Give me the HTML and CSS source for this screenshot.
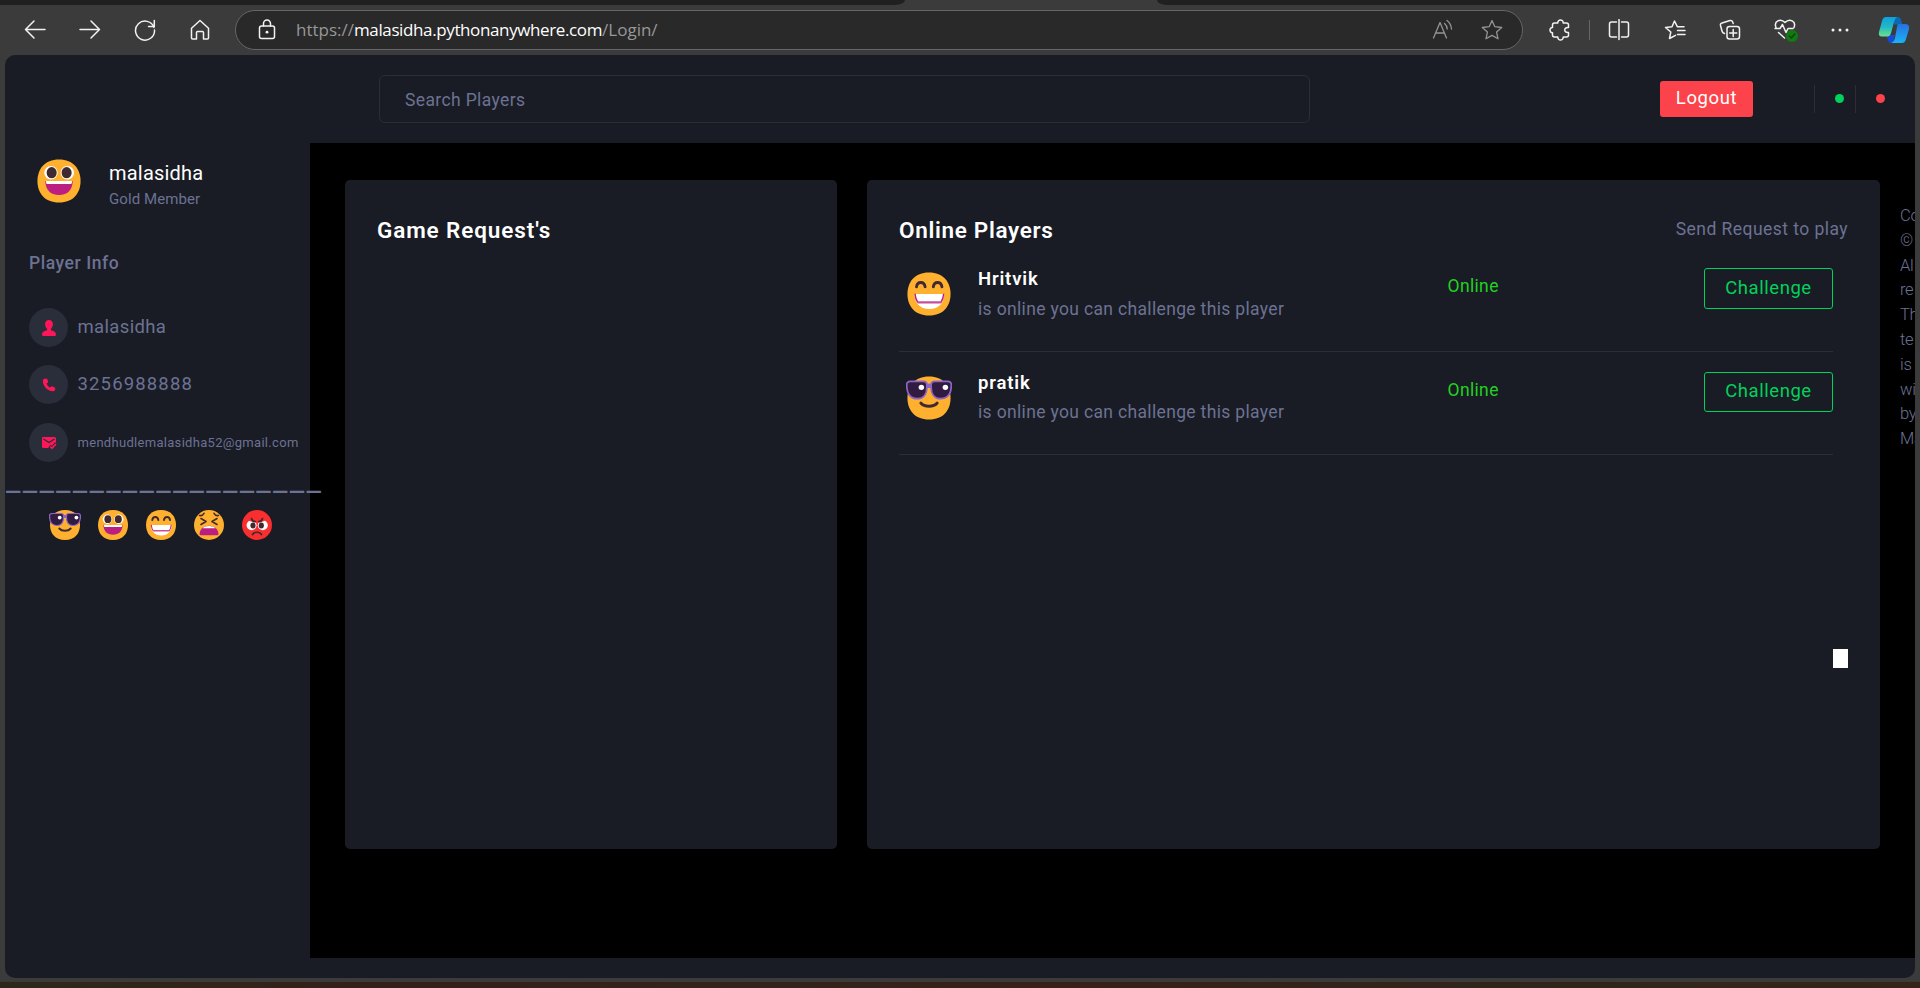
FILE: index.html
```html
<!DOCTYPE html>
<html lang="en">
<head>
<meta charset="utf-8">
<title>Players</title>
<link rel="stylesheet" href="styles.css">
</head>
<body>
<svg class="defs" aria-hidden="true">
  <symbol id="grin-eyes" viewBox="0 0 32 32">
    <path fill="#ffb02e" d="M16 1c10 0 15 6.700 15 15s-5 15-15 15S1 24.300 1 16 6 1 16 1z"/>
    <circle cx="10.400" cy="10.200" r="4.700" fill="#fff"/><circle cx="21.800" cy="10.200" r="4.700" fill="#fff"/>
    <ellipse cx="10.900" cy="10.200" rx="3.500" ry="3.900" fill="#402a32"/><ellipse cx="21.300" cy="10.200" rx="3.500" ry="3.900" fill="#402a32"/>
    <path fill="#bb1d80" d="M6.500 16h19c0 6-3.500 9.800-9.500 9.800S6.500 22 6.500 16z"/>
    <path fill="#fff" d="M7 16h18v1.300q0 .7-.7.7H7.700Q7 18 7 17.300z"/>
  </symbol>
  <symbol id="beam" viewBox="0 0 32 32">
    <path fill="#ffb02e" d="M16 1c10 0 15 6.700 15 15s-5 15-15 15S1 24.300 1 16 6 1 16 1z"/>
    <path d="M7.300 11c.5-4 5.500-4 6 0M19 11c.5-4 5.500-4 6 0" fill="none" stroke="#402a32" stroke-width="2" stroke-linecap="round"/>
    <path fill="#fff" d="M6 16h20.500c0 6-3.500 10.500-10.250 10.500S6 22 6 16z"/>
    <path d="M6.300 15.800q.2 3.600 2 6.100M26.200 15.800q-.2 3.600-2 6.100" fill="none" stroke="#bb1d80" stroke-width="1"/>
    <path fill="#c94f9b" d="M7.500 21.100h17.500l-.8 1.500H8.300z"/>
  </symbol>
  <symbol id="cool" viewBox="0 0 32 32">
    <path fill="#ffb02e" d="M16 1c10 0 15 6.700 15 15s-5 15-15 15S1 24.300 1 16 6 1 16 1z"/>
    <path d="M10.300 19.500c2.500 3 8.900 3 11.400 0" fill="none" stroke="#402a32" stroke-width="2" stroke-linecap="round"/>
    <path d="M.5 7q0-2.500 2.500-2.500h9q2.500 0 2.500 2v1.500h3V6.500q0-2 2.500-2h9q2.500 0 2.500 2.500c0 6-2.500 9.500-7.500 9.500-4 0-6.500-3-6.500-8h-3c0 5-2.500 8-6.500 8C3 16.500.5 13 .5 7z" fill="#321b41" stroke="#8d65c5" stroke-width="1.200"/>
    <path d="M14 7.200h4" stroke="#8d65c5" stroke-width="2.400"/>
    <circle cx="10.700" cy="8.600" r="1.900" fill="#fff"/><circle cx="27.400" cy="8.600" r="1.900" fill="#fff"/>
  </symbol>
  <symbol id="tired" viewBox="0 0 32 32">
    <circle cx="16" cy="16" r="15" fill="#ffb02e"/>
    <path d="M6.500 6.500Q9.500 7 11 4.300M25.500 6.500Q22.500 7 21 4.300M8 9.500l5 3-5 3M24 9.500l-5 3 5 3" fill="none" stroke="#402a32" stroke-width="1.600" stroke-linecap="round" stroke-linejoin="round"/>
    <path fill="#bb1d80" d="M6.500 25c.5-11 18.500-11 19 0q0 1.300-1.500 1.300H8Q6.500 26.300 6.500 25z"/>
    <path fill="#fff" d="M9.500 19.300c3-3.100 10-3.100 13 0z"/>
  </symbol>
  <symbol id="angry" viewBox="0 0 32 32">
    <circle cx="16" cy="16" r="15" fill="#f92f2f"/>
    <circle cx="10.600" cy="16.200" r="5" fill="#fff"/><circle cx="21.800" cy="16.200" r="5" fill="#fff"/>
    <ellipse cx="12" cy="16.500" rx="2.600" ry="3" fill="#402a32"/><ellipse cx="20.300" cy="16.500" rx="2.600" ry="3" fill="#402a32"/>
    <path fill="#f92f2f" d="M5 10h6l4 4-5-1.500zM27 10h-6l-4 4 5-1.500z"/>
    <path d="M10.500 9.500q.7 3 3.800 3M21.500 9.500q-.7 3-3.800 3M11.500 25.500c1.500-3 7.500-3 9 0" fill="none" stroke="#402a32" stroke-width="1.700" stroke-linecap="round"/>
  </symbol>
</svg>

<div class="tabstrip"><div class="tabs-left"></div><div class="tabs-right"></div></div>

<div class="toolbar">
  <div class="tool"><svg width="22" height="22" viewBox="0 0 22 22"><path d="M21 10.500H1.500M10 2L1.500 10.500 10 19"/></svg></div>
  <div class="tool"><svg width="22" height="22" viewBox="0 0 22 22"><path d="M1 10.500h19.500M12 2l8.500 8.500L12 19"/></svg></div>
  <div class="tool"><svg width="22" height="22" viewBox="0 0 22 22"><path d="M20 8.500A9.500 9.500 0 1 0 20.500 11M20.300 1.500v6H14.500"/></svg></div>
  <div class="tool"><svg width="22" height="22" viewBox="0 0 22 22"><path d="M2.500 9.200L11 1.500l8.500 7.700V19q0 1-1 1h-4v-6.500q0-1-1-1h-5q-1 0-1 1V20h-4q-1 0-1-1z"/></svg></div>
  <div class="address">
    <svg class="lock" width="18" height="22" viewBox="0 0 18 22"><rect x="1.500" y="7" width="15" height="12.500" rx="2"/><path d="M5.500 7V4.500a3.500 3.500 0 0 1 7 0V7"/><circle class="solid" cx="9" cy="13.200" r="1.400"/></svg>
    <div class="url">https://<span class="host">malasidha.pythonanywhere.com</span>/Login/</div>
    <svg class="dim" width="22" height="22" viewBox="0 0 22 22"><path d="M1.500 19L8 3.500 14.500 19M3.500 14h9M12.500 4.500q2.500 2 2.700 5.500M15 1.500q4 3 4.500 8.500"/></svg>
    <svg class="dim star" width="24" height="24" viewBox="0 0 24 24"><path d="M12 2.500l2.800 6.200 6.900.8-5.100 4.600 1.400 6.700-6-3.400-6 3.400 1.400-6.700-5.100-4.600 6.900-.8z"/></svg>
  </div>
  <div class="tool ext"><svg width="22" height="22" viewBox="0 0 22 22"><path d="M5.500 4h3.300C8.500 0 14.500 0 14.200 4h3.300q2 0 2 2v2.500c-5-.8-5 5.800 0 5V16q0 2-2 2h-3.300c.3 4-5.700 4-5.400 0H5.500q-2 0-2-2v-2.300C.2 14 .2 8.200 3.500 8.500V6q0-2 2-2z"/></svg></div>
  <div class="sep"></div>
  <div class="tool split"><svg width="22" height="22" viewBox="0 0 22 22"><path d="M8.500 3H3.500q-2 0-2 2v11q0 2 2 2h5M13.500 3h5q2 0 2 2v11q0 2-2 2h-5M11 .5v20"/></svg></div>
  <div class="tool"><svg width="22" height="22" viewBox="0 0 22 22"><path d="M11.500 16.300l-6 3.200L6.800 13 1.500 8.500l6.500-.8L10.500 2l2.800 5.700H20M13.500 11.500H21M13.500 15.500H21"/></svg></div>
  <div class="tool"><svg width="22" height="22" viewBox="0 0 22 22"><rect x="8" y="7.500" width="12.500" height="12.500" rx="2.500"/><path d="M14.200 10.500v7M10.700 14h7M5.500 14.500Q3.500 14 3 12L1.500 6.500Q1 4.500 3 4l8-2.500q2-.5 2.700 1.500l.5 1.500"/></svg></div>
  <div class="tool heart"><svg width="26" height="26" viewBox="0 0 26 26"><path d="M3 10.500C.5 4 7.500.8 12 5.500 16.500.8 23.500 4 21 10.500M2 11.500h5l2.500-4 3.500 8 2-4h5M5.500 15.500L11.500 21"/><circle cx="19" cy="19" r="6" fill="#107c10" stroke="none"/><path d="M16.300 19l2 2 3.500-4" stroke="#173d17"/></svg></div>
  <div class="tool"><svg width="20" height="6" viewBox="0 0 20 6"><g class="solid"><circle cx="3" cy="3" r="1.500"/><circle cx="10" cy="3" r="1.500"/><circle cx="17" cy="3" r="1.500"/></g></svg></div>
  <div class="tool copilot"><svg width="32" height="28" viewBox="0 0 32 28">
    <defs><linearGradient id="ca" x1="0" y1="0" x2="0" y2="1"><stop offset="0" stop-color="#109fe0"/><stop offset=".5" stop-color="#20b8c5"/><stop offset="1" stop-color="#70e18c"/></linearGradient><linearGradient id="cb" x1="0" y1="0" x2="0" y2="1"><stop offset="0" stop-color="#2870df"/><stop offset="1" stop-color="#18b4f5"/></linearGradient></defs>
    <g stroke="none"><path fill="#0b69b1" d="M16 1h4q2.500 0 3 3l1.500 4.500H16z"/><path fill="#1649db" d="M8 19h9l-2 8h-2q-2.500 0-3-3z"/>
    <path fill="url(#ca)" d="M8 1h11q-2 1-3 5l-3 11q-1 3.500-4 3.500H4Q0 20.500 1 16L4 5q1-4 4-4z"/>
    <path fill="url(#cb)" d="M20 8h7q5 0 4 5l-3 10q-1 4-4 4H13q3-1 4-5l2-11q.3-2 1-3z"/></g></svg></div>
</div>

<div class="page">
  <header class="header">
    <div class="search">Search Players</div>
    <button class="logout">Logout</button>
    <div class="status"><i class="dot green"></i></div>
    <div class="status"><i class="dot red"></i></div>
  </header>
  <div class="main">
    <aside class="sidebar">
      <div class="profile">
        <svg class="face"><use href="#grin-eyes"/></svg>
        <div><div class="name">malasidha</div><div class="rank">Gold Member</div></div>
      </div>
      <div class="section">Player Info</div>
      <div class="info"><span class="bubble"><svg width="16" height="18" viewBox="0 0 16 18"><path d="M8 1c2.500 0 3.900 1.800 3.900 4.300 0 1.800-.8 3.600-2 4.500v1.400c2.500.5 5.100 1.700 5.100 4.300Q15 17 13.500 17h-11Q1 17 1 15.500c0-2.600 2.600-3.800 5.100-4.300V9.800c-1.200-.9-2-2.700-2-4.500C4.100 2.800 5.500 1 8 1z"/></svg></span><span class="nick">malasidha</span></div>
      <div class="info phone"><span class="bubble"><svg width="14" height="14" viewBox="0 0 14 14"><path d="M2.500.8L4.300.5q.7 0 1 .8l.8 2.200q.2.700-.4 1.200L4.500 5.600q.8 2.600 3.400 4l1.500-1.200q.6-.4 1.300 0l2 1.200q.7.500.6 1.200l-.4 1.400q-.5 1-1.900 1C5.500 13.300.7 7.800.9 3 1 1.500 1.500 1 2.500.8z"/></svg></span><span class="number">3256988888</span></div>
      <div class="info mail"><span class="bubble"><svg width="16" height="14" viewBox="0 0 16 14"><path d="M1.500 1h12Q15 1 15 2.500V7L9.500 12H2.500Q1 12 1 10.500v-8Q1 1 1.500 1z"/><path d="M2.500 3L8 6.500 13.500 3" fill="none" stroke="#2a2d3a" stroke-width="1.200"/><path d="M8.500 10l2.500 2.500 4.300-5" fill="none" stroke="#2a2d3a" stroke-width="3.500"/><path d="M9.300 10.500l1.700 1.700 4-4.200" fill="none" stroke="#ff1658" stroke-width="1.700"/></svg></span><span class="email">mendhudlemalasidha52@gmail.com</span></div>
      <div class="rule">___________________</div>
      <div class="emojis"><svg><use href="#cool"/></svg><svg><use href="#grin-eyes"/></svg><svg><use href="#beam"/></svg><svg><use href="#tired"/></svg><svg><use href="#angry"/></svg></div>
    </aside>
    <main class="content">
      <section class="card requests"><h2>Game Request's</h2></section>
      <section class="card players">
        <div class="card-head"><h2>Online Players</h2><span class="hint">Send Request to play</span></div>
        <div class="player">
          <svg class="avatar"><use href="#beam"/></svg>
          <div class="who"><div class="pname">Hritvik</div><div class="sub">is online you can challenge this player</div></div>
          <span class="online">Online</span><button class="challenge">Challenge</button>
        </div>
        <div class="player second">
          <svg class="avatar"><use href="#cool"/></svg>
          <div class="who"><div class="pname">pratik</div><div class="sub">is online you can challenge this player</div></div>
          <span class="online">Online</span><button class="challenge">Challenge</button>
        </div>
        <div class="block"></div>
      </section>
      <footer class="copy">Co<br>©<br>Al<br>re<br>Th<br>te<br>is<br>wi<br>by<br>Ma</footer>
    </main>
  </div>
</div>
<div class="desktop"></div>
</body>
</html>
```
FILE: styles.css
```css
* { box-sizing: border-box; }
body { margin: 0; height: 988px; overflow: hidden; display: flex; flex-direction: column; background: #3b3b3b; font-family: Roboto, "Liberation Sans", sans-serif; color: #6c7293; }
.defs { position: absolute; width: 0; height: 0; }
svg { display: block; flex: none; }
h2 { margin: 0; font-size: 22.500px; font-weight: 600; letter-spacing: .68px; line-height: 32px; color: #fff; }
button { font-family: inherit; padding: 0; }

.tabstrip { flex: none; height: 5px; display: flex; justify-content: space-between; }
.tabs-left { width: 905px; background: #202020; border-bottom-right-radius: 10px 5px; }
.tabs-right { width: 763px; background: #202020; border-bottom-left-radius: 10px 5px; }

.toolbar { flex: none; height: 50px; padding-left: 7px; display: flex; align-items: center; }
.toolbar svg { fill: none; stroke: #f2f2f2; stroke-width: 1.5; stroke-linejoin: round; stroke-linecap: round; }
.toolbar .solid { fill: #f2f2f2; stroke: none; }
.tool { width: 55px; height: 50px; flex: none; display: flex; align-items: center; justify-content: center; }
.address { width: 1288px; height: 40px; margin-left: 8px; border: 1px solid #666; border-radius: 20px; background: #292929; display: flex; align-items: center; }
.lock { margin-left: 22px; }
.url { flex: 1; margin-left: 20px; font: 17px/38px "Open Sans", sans-serif; letter-spacing: 0; color: #979797; white-space: nowrap; }
.host { color: #fff; letter-spacing: -.38px; }
.toolbar svg.dim { stroke: #949494; stroke-width: 1.3; }
.star { margin: 0 18px 0 26px; }
.ext { margin-left: 9px; }
.sep { width: 1px; height: 20px; margin: 0 2px; background: #666; }
.split { padding-right: 1px; }
.heart { padding-left: 2px; }
.copilot { width: 53px; }

.page { flex: none; width: 1910px; height: 923px; margin-left: 5px; background: #191c24; border-radius: 10px; overflow: hidden; display: flex; flex-direction: column; }
.header { flex: none; height: 88px; padding-top: 20px; display: flex; }
.search { width: 931px; height: 48px; margin-left: 374px; padding-left: 25px; border: 1px solid #2c2e33; border-radius: 6px; font-size: 17.500px; line-height: 49px; letter-spacing: .37px; }
.logout { width: 93px; height: 36px; margin: 6px 61px 0 350px; border: 0; border-radius: 3px; background: #fc424a; color: #fff; font-size: 18.500px; line-height: 32px; letter-spacing: .6px; padding-bottom: 2px; }
.status { width: 41px; height: 28px; margin-top: 10px; border-left: 1px solid #2c2e33; padding: 8.500px 0 0 20px; }
.dot { display: block; width: 9px; height: 9px; border-radius: 50%; }
.green { background: #00d25b; }
.red { background: #fc424a; }

.main { display: flex; height: 815px; flex: none; }
.sidebar { width: 305px; flex: none; position: relative; z-index: 1; }
.profile { display: flex; padding: 14px 0 0 30.500px; height: 96px; }
.face { width: 46px; height: 46px; margin: .5px 27.500px 0 0; }
.name { margin-top: 4px; font-size: 20px; line-height: 24px; letter-spacing: .2px; color: #fff; }
.rank { margin-top: 3px; font-size: 15px; line-height: 22px; letter-spacing: .08px; }
.section { height: 69px; padding-left: 24px; font-size: 17.500px; font-weight: 500; line-height: 49px; letter-spacing: .55px; }
.info { display: flex; align-items: center; height: 39px; margin-left: 24px; font-size: 18px; line-height: 39px; white-space: nowrap; }
.bubble { width: 39px; height: 39px; margin-right: 9.500px; border-radius: 50%; background: #2a2d3a; display: flex; align-items: center; justify-content: center; }
.bubble svg { fill: #ff1658; }
.nick { font-size: 18.500px; letter-spacing: .35px; height: 39px; }
.number { font-size: 18.500px; letter-spacing: 1.15px; height: 39px; }
.phone { margin-top: 18px; }
.mail { margin-top: 19px; }
.email { font-size: 13px; letter-spacing: .3px; }
.rule { margin: 1px 0 0 1px; height: 34px; font-size: 32px; line-height: 34px; letter-spacing: 2.25px; white-space: nowrap; }
.emojis { display: flex; gap: 16px; padding: 12px 0 0 43.500px; }
.emojis svg { width: 32px; height: 32px; overflow: visible; }

.content { width: 1605px; flex: none; background: #000; padding: 37px 0 0 35px; display: flex; overflow: hidden; }
.card { height: 669px; background: #191c24; border-radius: 5px; padding: 34px 32px 0; flex: none; }
.requests { width: 492px; margin-right: 30px; }
.requests h2 { letter-spacing: .88px; }
.players { width: 1013px; }
.card-head { display: flex; justify-content: space-between; height: 30px; }
.hint { font-size: 17.500px; line-height: 31px; letter-spacing: .45px; }
.player { display: flex; width: 934px; height: 108px; border-bottom: 1px solid #2c2e33; align-items: flex-start; padding-top: 24px; }
.second { height: 103px; padding-top: 20px; }
.avatar { width: 46px; height: 46px; margin: 2.500px 26px 0 7px; overflow: visible; }
.who { width: 469.500px; }
.pname { margin-top: -1px; font-size: 18.500px; font-weight: 600; line-height: 24px; letter-spacing: .85px; color: #fff; }
.sub { margin-top: 5px; font-size: 17.500px; line-height: 27px; letter-spacing: .34px; }
.second .sub { margin-top: 4px; }
.online { width: 256.500px; margin-top: 5px; font-size: 17.500px; line-height: 27px; letter-spacing: .35px; color: #23d023; }
.challenge { width: 129px; height: 41px; border: 1px solid #00d25b; border-radius: 3px; background: none; color: #00d25b; font-size: 18.500px; line-height: 37px; padding-bottom: 1px; letter-spacing: .55px; }
.second .challenge { height: 40px; }
.block { width: 15px; height: 19px; margin: 194px 0 0 934px; background: #fff; }
.copy { flex: none; margin: 24px 0 0 20px; font-size: 16.500px; font-weight: 300; line-height: 24.800px; letter-spacing: -.3px; white-space: nowrap; }
.desktop { height: 6px; margin-top: 4px; background: linear-gradient(90deg, #2e281a, #351f18 20%, #33231a 40%, #392019 55%, #30251a 80%, #352417); }
```
